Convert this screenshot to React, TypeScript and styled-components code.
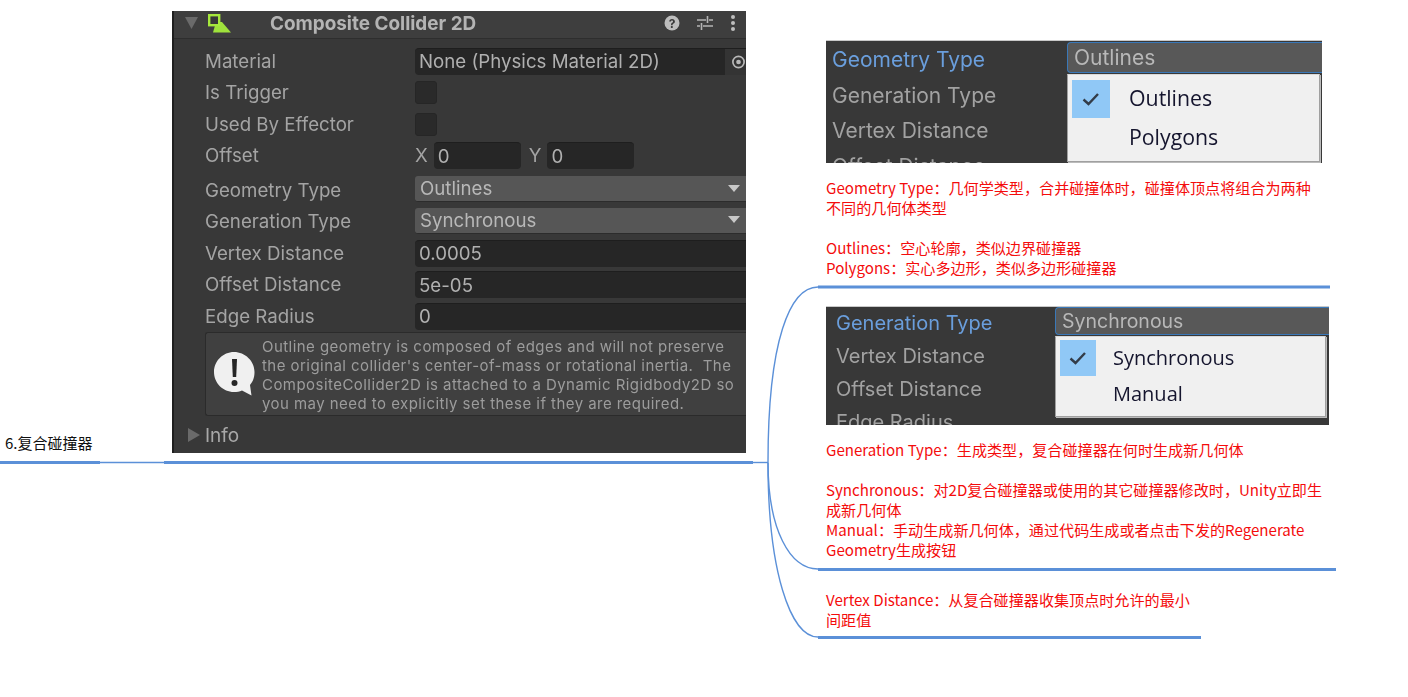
import React from "react";
import styled, { createGlobalStyle } from "styled-components";

const Global = createGlobalStyle`
  html, body { margin: 0; padding: 0; background: #fff; }
  body { font-family: "Noto Sans CJK SC", "Liberation Sans", sans-serif; overflow: hidden; }
`;

const Canvas = styled.div`
  position: relative;
  width: 1408px;
  height: 697px;
  background: #fff;
  overflow: hidden;
`;

const Wires = styled.svg`
  position: absolute;
  left: 0;
  top: 0;
`;

const Node = styled.div<{ $x: number; $y: number; $w?: number; $h?: number }>`
  position: absolute;
  left: ${(p) => p.$x}px;
  top: ${(p) => p.$y}px;
  ${(p) => (p.$w ? `width: ${p.$w}px;` : "")}
  ${(p) => (p.$h ? `height: ${p.$h}px;` : "")}
`;

const TopicLabel = styled.div`
  font-size: 15px;
  line-height: 20px;
  color: #101010;
  white-space: nowrap;
`;

const Note = styled.div`
  font-size: 15.1px;
  line-height: 20px;
  color: #f40c0c;
  white-space: nowrap;
`;

const NoteGap = styled.div`
  height: 20px;
`;

/* ---------- inspector ---------- */
const Shot = styled.div`
  width: 100%;
  height: 100%;
  box-sizing: border-box;
  background: #383838;
  overflow: hidden;
  font-family: Inter, "Liberation Sans", sans-serif;
  filter: blur(0.45px);
  position: relative;
`;

const Inspector = styled(Shot)`
  border-left: 2px solid #1f1f1f;
  display: flex;
  flex-direction: column;
`;

const Header = styled.div`
  height: 27px;
  flex: none;
  display: flex;
  align-items: center;
  border-bottom: 1px solid #2e2e2e;
  background: #3e3e3e;
  box-sizing: content-box;
`;

const Tri = styled.svg`
  flex: none;
`;

const Title = styled.div`
  font-size: 18.9px;
  font-weight: 700;
  color: #b4b4b4;
  margin: -3px 0 0 38px;
  flex: 1;
  white-space: nowrap;
`;

const HeaderIcons = styled.div`
  display: flex;
  align-items: center;
  gap: 17px;
  margin: -3px 10px 0 0;
`;

const Rows = styled.div`
  display: flex;
  flex-direction: column;
  padding: 6.5px 0 0 31px;
`;

const Row = styled.div<{ $top?: number }>`
  height: 31.5px;
  display: flex;
  align-items: center;
  margin-top: ${(p) => p.$top ?? 0}px;
  flex: none;
`;

const Label = styled.div`
  width: 210px;
  flex: none;
  font-size: 18.7px;
  color: #a4a4a4;
  white-space: nowrap;
`;

const Field = styled.div`
  flex: 1;
  height: 27px;
  background: #262626;
  border-radius: 4px 0 0 4px;
  border-top: 1px solid #1e1e1e;
  box-sizing: border-box;
  display: flex;
  align-items: center;
  padding-left: 4px;
  color: #b0b0b0;
  font-size: 18.7px;
  white-space: nowrap;
`;

const PickerBtn = styled.div`
  margin-left: auto;
  width: 21px;
  height: 100%;
  background: #343434;
  display: flex;
  align-items: center;
  justify-content: flex-start;
  padding-left: 6px;
  box-sizing: border-box;
`;

const Check = styled.div`
  width: 22px;
  height: 23px;
  background: #2a2a2a;
  border-radius: 3px;
  border: 1px solid #262626;
  box-sizing: border-box;
`;

const Axis = styled.span`
  font-size: 18.7px;
  color: #a4a4a4;
  margin: 0 6px 0 0;
`;

const SmallField = styled(Field)`
  flex: none;
  width: 87px;
  border-radius: 4px;
  padding-left: 4px;
`;

const Vec = styled.div`
  display: flex;
  align-items: center;
  flex: 1;
`;

const VecGap = styled.div`
  width: 8px;
`;

const Dropdown = styled.div`
  flex: 1;
  height: 26px;
  background: #565656;
  border-bottom: 1px solid #2c2c2c;
  border-radius: 3px 0 0 3px;
  box-sizing: border-box;
  display: flex;
  align-items: center;
  justify-content: space-between;
  padding: 0 6px 0 5px;
  margin-top: -2px;
  color: #b8b8b8;
  font-size: 18.7px;
`;

const Help = styled.div`
  margin: -0.5px 0 0 31px;
  height: 84px;
  flex: none;
  box-sizing: border-box;
  border: 1px solid #2b2b2b;
  border-right: none;
  border-radius: 3px 0 0 3px;
  background: #404040;
  display: flex;
  align-items: center;
  padding-left: 7px;
`;

const HelpText = styled.div`
  margin: 3px 0 0 6px;
  font-size: 15px;
  line-height: 19px;
  letter-spacing: 0.45px;
  color: #9c9c9c;
  white-space: pre;
`;

const InfoRow = styled.div`
  display: flex;
  align-items: center;
  height: 38px;
  padding: 2px 0 0 14px;
  box-sizing: border-box;
  gap: 5px;
  color: #a8a8a8;
  font-size: 19px;
`;

/* ---------- dropdown shots ---------- */
const Crop = styled(Shot)`
  border-top: 1px solid #c9c9c9;
  display: flex;
`;

const LabelCol = styled.div<{ $pad: number; $gap: number; $top: number; $size: number }>`
  flex: none;
  display: flex;
  flex-direction: column;
  padding: ${(p) => p.$top}px 0 0 ${(p) => p.$pad}px;
  gap: ${(p) => p.$gap}px;
  font-size: ${(p) => p.$size}px;
  line-height: 26px;
`;

const CropLabel = styled.div<{ $active?: boolean }>`
  color: ${(p) => (p.$active ? "#6a9edc" : "#a2a2a2")};
  white-space: nowrap;
`;

const DropWrap = styled.div<{ $w: number; $x: number }>`
  position: absolute;
  left: ${(p) => p.$x}px;
  top: 0;
  width: ${(p) => p.$w}px;
  bottom: 0;
`;

const OpenSelect = styled.div<{ $h: number; $top: number; $size: number }>`
  height: ${(p) => p.$h}px;
  box-sizing: border-box;
  margin-top: ${(p) => p.$top}px;
  background: #585858;
  border: 1px solid #3a78b8;
  border-right: none;
  border-radius: 4px 0 0 4px;
  padding: 0 0 1px 6px;
  display: flex;
  align-items: center;
  color: #b8b8b8;
  font-size: ${(p) => p.$size}px;
`;

const Popup = styled.div<{ $h: number; $r: number; $top: number; $pad: number }>`
  margin-top: ${(p) => p.$top}px;
  margin-right: ${(p) => p.$r}px;
  height: ${(p) => p.$h}px;
  background: #f0f0f0;
  box-sizing: border-box;
  border: 1px solid #a0a0a0;
  border-top-color: #d8d8d8;
  padding: ${(p) => p.$pad}px 0 0 4px;
  display: flex;
  flex-direction: column;
  box-shadow: 1px 1px 0 #bbb;
`;

const Item = styled.div<{ $size: number; $gap: number; $font: number }>`
  display: flex;
  align-items: center;
  height: ${(p) => p.$size}px;
  gap: ${(p) => p.$gap}px;
  flex: none;
  font-family: "Open Sans", "Noto Sans", sans-serif;
  font-size: ${(p) => p.$font}px;
  color: #15152e;
  white-space: nowrap;
`;

const ItemText = styled.span`
  margin-bottom: 2px;
`;

const Tick = styled.div<{ $size: number; $on?: boolean }>`
  width: ${(p) => p.$size}px;
  height: ${(p) => p.$size}px;
  flex: none;
  background: ${(p) => (p.$on ? "#90c8f6" : "transparent")};
  display: flex;
  align-items: center;
  justify-content: center;
`;

const Caret = () => (
  <svg width="12" height="8" viewBox="0 0 12 8">
    <path d="M0 0H12L6 7Z" fill="#c8c8c8" />
  </svg>
);

const CheckMark = () => (
  <svg width="20" height="16" viewBox="0 0 20 16">
    <path d="M2.5 8.5L7.5 13L17 3" fill="none" stroke="#333c48" strokeWidth="2.4" />
  </svg>
);

const ColliderIcon = () => (
  <svg width="24" height="19" viewBox="0 0 24 19" style={{ marginLeft: 10, marginTop: -3 }}>
    <path d="M8 8H14L23 18.5H5Z" fill="#9fe23c" />
    <rect x="1.2" y="1.2" width="10" height="10" fill="#383838" stroke="#a6e83c" strokeWidth="2.4" />
  </svg>
);

const HelpCircle = () => (
  <svg width="16" height="16" viewBox="0 0 16 16">
    <circle cx="8" cy="8" r="7.5" fill="#bdbdbd" />
    <text x="8" y="12.5" textAnchor="middle" fontSize="12" fontWeight="700" fontFamily="Inter, sans-serif" fill="#383838">?</text>
  </svg>
);

const Sliders = () => (
  <svg width="16" height="16" viewBox="0 0 16 16">
    <path d="M0 5H9M12 5H16M10.5 1V8M0 11H3M6 11H16M4.5 8V15" stroke="#b4b4b4" strokeWidth="1.6" fill="none" />
  </svg>
);

const Dots = () => (
  <svg width="6" height="18" viewBox="0 0 6 18">
    <circle cx="3" cy="3" r="2" fill="#bdbdbd" />
    <circle cx="3" cy="9" r="2" fill="#bdbdbd" />
    <circle cx="3" cy="15" r="2" fill="#bdbdbd" />
  </svg>
);

const Alert = () => (
  <svg width="43" height="46" viewBox="0 0 43 46" style={{ flex: "none" }}>
    <path d="M21 1C32 1 41.5 10 41.5 21C41.5 27 39.5 31 37 34L38.5 44.5L29 39.5C26.5 40.5 24 41 21 41C10 41 1 32 1 21C1 10 10 1 21 1Z" fill="#f0f0f0" />
    <path d="M19 8H24L23.2 26H19.8Z" fill="#262626" />
    <circle cx="21.5" cy="32" r="3" fill="#262626" />
  </svg>
);

const Target = () => (
  <svg width="16" height="16" viewBox="0 0 16 16">
    <circle cx="8" cy="8" r="6" fill="none" stroke="#b8b8b8" strokeWidth="1.8" />
    <circle cx="8" cy="8" r="2.5" fill="#b8b8b8" />
  </svg>
);

const BLUE = "#5b90d8";

const helpCopy = `Outline geometry is composed of edges and will not preserve
the original collider's center-of-mass or rotational inertia.  The
CompositeCollider2D is attached to a Dynamic Rigidbody2D so
you may need to explicitly set these if they are required.`;

export default function App() {
  return (
    <Canvas>
      <Global />
      <Wires width="1408" height="697" viewBox="0 0 1408 697">
        <g fill="none" stroke={BLUE}>
          <path d="M0 462.5H100" strokeWidth="3" />
          <path d="M100 462.5H164" strokeWidth="1.4" />
          <path d="M164 462.5H753" strokeWidth="3" />
          <path d="M753 462.5H768" strokeWidth="1.4" />
          <path d="M768 462.5C768 340 790 287 818 287" strokeWidth="1.4" />
          <path d="M768 462.5C768 530 790 569 818 569" strokeWidth="1.4" />
          <path d="M768 462.5C768 570 790 637 818 637" strokeWidth="1.4" />
          <path d="M818 287H1330" strokeWidth="3" />
          <path d="M818 569.5H1336" strokeWidth="3" />
          <path d="M818 637.5H1201" strokeWidth="3" />
        </g>
      </Wires>

      <Node $x={5} $y={433}>
        <TopicLabel>6.复合碰撞器</TopicLabel>
      </Node>

      <Node $x={172} $y={11} $w={574} $h={442}>
        <Inspector>
          <Header>
            <Tri width="13" height="12" viewBox="0 0 13 12" style={{ marginLeft: 11, marginTop: -3 }}>
              <path d="M0 0H13L6.5 12Z" fill="#6a6a6a" />
            </Tri>
            <ColliderIcon />
            <Title>Composite Collider 2D</Title>
            <HeaderIcons>
              <HelpCircle />
              <Sliders />
              <Dots />
            </HeaderIcons>
          </Header>
          <Rows>
            <Row>
              <Label>Material</Label>
              <Field>
                None (Physics Material 2D)
                <PickerBtn><Target /></PickerBtn>
              </Field>
            </Row>
            <Row><Label>Is Trigger</Label><Check /></Row>
            <Row><Label>Used By Effector</Label><Check /></Row>
            <Row>
              <Label>Offset</Label>
              <Vec>
                <Axis>X</Axis>
                <SmallField>0</SmallField>
                <VecGap />
                <Axis>Y</Axis>
                <SmallField>0</SmallField>
              </Vec>
            </Row>
            <Row $top={3}>
              <Label>Geometry Type</Label>
              <Dropdown>Outlines<Caret /></Dropdown>
            </Row>
            <Row><Label>Generation Type</Label><Dropdown>Synchronous<Caret /></Dropdown></Row>
            <Row><Label>Vertex Distance</Label><Field>0.0005</Field></Row>
            <Row><Label>Offset Distance</Label><Field>5e-05</Field></Row>
            <Row><Label>Edge Radius</Label><Field>0</Field></Row>
          </Rows>
          <Help>
            <Alert />
            <HelpText>{helpCopy}</HelpText>
          </Help>
          <InfoRow>
            <Tri width="12" height="14" viewBox="0 0 12 14">
              <path d="M0 0L12 7L0 14Z" fill="#6a6a6a" />
            </Tri>
            Info
          </InfoRow>
        </Inspector>
      </Node>

      <Node $x={826} $y={40} $w={496} $h={123}>
        <Crop>
          <LabelCol $pad={6} $gap={9.5} $top={6} $size={21}>
            <CropLabel $active>Geometry Type</CropLabel>
            <CropLabel>Generation Type</CropLabel>
            <CropLabel>Vertex Distance</CropLabel>
            <CropLabel>Offset Distance</CropLabel>
          </LabelCol>
          <DropWrap $x={241} $w={255}>
            <OpenSelect $h={31} $top={1} $size={21}>Outlines</OpenSelect>
            <Popup $h={88} $r={2} $top={1} $pad={4}>
              <Item $size={39} $gap={19} $font={21.3}><Tick $size={38} $on><CheckMark /></Tick><ItemText>Outlines</ItemText></Item>
              <Item $size={39} $gap={19} $font={21.3}><Tick $size={38} /><ItemText>Polygons</ItemText></Item>
            </Popup>
          </DropWrap>
        </Crop>
      </Node>

      <Node $x={826} $y={177}>
        <Note>Geometry Type：几何学类型，合并碰撞体时，碰撞体顶点将组合为两种</Note>
        <Note>不同的几何体类型</Note>
        <NoteGap />
        <Note>Outlines：空心轮廓，类似边界碰撞器</Note>
        <Note>Polygons：实心多边形，类似多边形碰撞器</Note>
      </Node>

      <Node $x={826} $y={306} $w={503} $h={119}>
        <Crop>
          <LabelCol $pad={10} $gap={7} $top={3} $size={20}>
            <CropLabel $active>Generation Type</CropLabel>
            <CropLabel>Vertex Distance</CropLabel>
            <CropLabel>Offset Distance</CropLabel>
            <CropLabel>Edge Radius</CropLabel>
          </LabelCol>
          <DropWrap $x={229} $w={274}>
            <OpenSelect $h={28} $top={0} $size={19.5}>Synchronous</OpenSelect>
            <Popup $h={81} $r={3} $top={1} $pad={3}>
              <Item $size={36} $gap={17} $font={20}><Tick $size={36} $on><CheckMark /></Tick><ItemText>Synchronous</ItemText></Item>
              <Item $size={37} $gap={17} $font={20}><Tick $size={36} /><ItemText>Manual</ItemText></Item>
            </Popup>
          </DropWrap>
        </Crop>
      </Node>

      <Node $x={826} $y={439}>
        <Note>Generation Type：生成类型，复合碰撞器在何时生成新几何体</Note>
        <NoteGap />
        <Note>Synchronous：对2D复合碰撞器或使用的其它碰撞器修改时，Unity立即生</Note>
        <Note>成新几何体</Note>
        <Note>Manual：手动生成新几何体，通过代码生成或者点击下发的Regenerate</Note>
        <Note>Geometry生成按钮</Note>
      </Node>

      <Node $x={826} $y={589}>
        <Note>Vertex Distance：从复合碰撞器收集顶点时允许的最小</Note>
        <Note>间距值</Note>
      </Node>
    </Canvas>
  );
}
